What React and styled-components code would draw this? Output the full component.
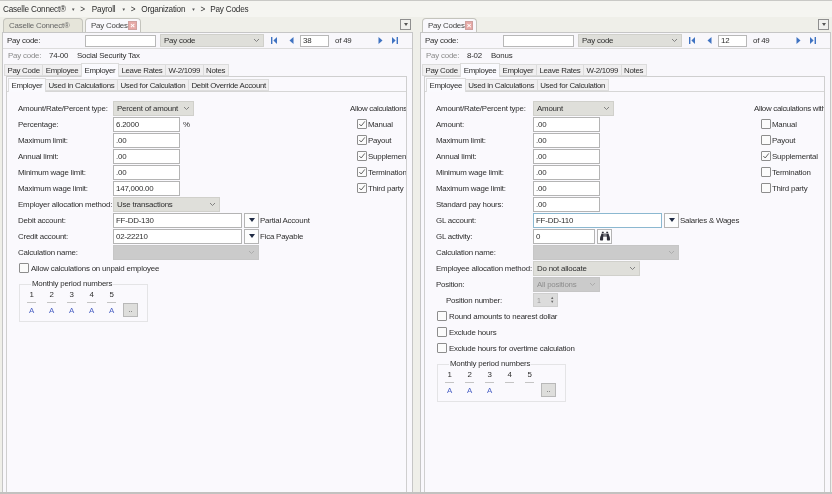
import React from "react";
import styled, { createGlobalStyle } from "styled-components";
import { FaBinoculars } from "react-icons/fa";

const Global = createGlobalStyle`
  html, body { margin: 0; padding: 0; background: #f1f0eb; }
  #root { width: 832px; height: 494px; overflow: hidden; }
`;

const Screen = styled.div`
  width: 832px;
  height: 494px;
  box-sizing: border-box;
  display: flex;
  flex-direction: column;
  overflow: hidden;
  background: #efefe9;
  border-top: 1px solid #c9c9c6;
  border-bottom: 2px solid #c2c2c0;
  font-family: "Liberation Sans", Arial, sans-serif;
  font-size: 7.9px;
  letter-spacing: -0.2px;
  color: #2e2e2e;
  filter: blur(0.3px);
`;

const Breadcrumb = styled.div`
  height: 16px;
  flex: none;
  display: flex;
  align-items: center;
  padding-left: 3px;
  gap: 5px;
  font-size: 8.2px;
  background: #f5f5f1;
`;

const Crumb = styled.span`
  margin-right: ${(p) => p.$gap || 0}px;
`;

const Caret = styled.span`
  font-size: 4.5px;
  color: #555;
`;

const Panes = styled.div`
  flex: 1;
  min-height: 0;
  display: flex;
  gap: 7px;
  padding-left: 2px;
`;

const PaneBox = styled.section`
  width: 411px;
  flex: none;
  display: flex;
  flex-direction: column;
`;

const TabStrip = styled.div`
  height: 15px;
  flex: none;
  display: flex;
  align-items: flex-end;
  gap: 2px;
  position: relative;
  padding-left: ${(p) => p.$pad}px;
`;

const DocTab = styled.div`
  height: 14px;
  box-sizing: border-box;
  padding: 0 3px 0 5px;
  display: flex;
  align-items: center;
  justify-content: space-between;
  white-space: nowrap;
  border: 1px solid #c4c4bd;
  border-bottom: 0;
  border-radius: 4px 4px 0 0;
  width: ${(p) => p.$w}px;
  background: ${(p) => (p.$active ? "#f9f8fc" : "#e6e5da")};
  color: ${(p) => (p.$active ? "#444" : "#666")};
`;

const CloseBox = styled.span`
  width: 9px;
  height: 9px;
  background: #e7a9a7;
  border: 1px solid #cfa09e;
  box-sizing: border-box;
  color: #fff;
  font-size: 8px;
  line-height: 7px;
  text-align: center;
  font-weight: 700;
`;

const StripMenu = styled.div`
  position: absolute;
  right: 2px;
  top: 2px;
  width: 11px;
  height: 11px;
  box-sizing: border-box;
  border: 1px solid #8f8f8f;
  background: #f0f0ee;
  display: flex;
  align-items: center;
  justify-content: center;
  &::after {
    content: "";
    border: 2.5px solid transparent;
    border-top: 3px solid #555;
    border-bottom: 0;
  }
`;

const PaneBody = styled.div`
  flex: 1;
  min-height: 0;
  display: flex;
  flex-direction: column;
  background: #f9f8fc;
  border: 1px solid #c6c6c6;
  border-bottom: 0;
`;

const Toolbar = styled.div`
  height: 16px;
  flex: none;
  box-sizing: border-box;
  display: flex;
  align-items: center;
  padding-left: 4px;
  border-bottom: 1px solid #dcdcdc;
  background: #f8f7fb;
`;

const ToolLabel = styled.span`
  width: 78px;
  flex: none;
`;

const ToolInput = styled.div`
  width: ${(p) => p.$w}px;
  height: 12px;
  flex: none;
  margin-right: ${(p) => p.$mr || 0}px;
  box-sizing: border-box;
  background: #fff;
  border: 1px solid #b8b8b8;
  padding-left: 2px;
  line-height: 10px;
`;

const NavBtn = styled.svg`
  width: 9px;
  height: 9px;
  flex: none;
  margin-right: ${(p) => p.$mr || 0}px;
`;

const OfText = styled.span`
  width: 47px;
  flex: none;
  padding-left: 6px;
  box-sizing: border-box;
`;

const Summary = styled.div`
  height: 13px;
  flex: none;
  display: flex;
  align-items: center;
  padding-left: 5px;
`;

const SummaryKey = styled.span`
  width: 41px;
  color: #8b8b8b;
`;

const SummaryCode = styled.span`
  width: ${(p) => p.$w}px;
`;

const MainTabs = styled.div`
  height: 14px;
  flex: none;
  display: flex;
  align-items: flex-end;
  padding-left: 2px;
  letter-spacing: -0.3px;
`;

const TabItem = styled.div`
  height: ${(p) => (p.$active ? 14 : 12)}px;
  box-sizing: border-box;
  padding: 0 2.5px;
  display: flex;
  align-items: center;
  background: ${(p) => (p.$active ? "#fafafe" : "#f0eff0")};
  border: 1px solid #dcdcdc;
  border-bottom: ${(p) => (p.$active ? "0" : "1px solid #dcdcdc")};
  margin-left: -1px;
  position: relative;
  white-space: nowrap;
  ${(p) => (p.$active ? "margin-bottom: -1px; z-index: 1;" : "")}
`;

const OuterPanel = styled.div`
  flex: 1;
  min-height: 0;
  margin: 0 5px 0 3px;
  padding-top: 1px;
  display: flex;
  flex-direction: column;
  border: 1px solid #cfcfcf;
  border-bottom: 0;
  background: #faf9fd;
`;

const SubTabs = styled(MainTabs)`
  height: 13px;
  padding-left: 2px;
`;

const InnerPanel = styled.div`
  flex: 1;
  min-height: 0;
  display: flex;
  border-top: 1px solid #d6d6d6;
  padding-top: 8px;
  overflow: hidden;
  background: #faf9fd;
`;

const FormColumn = styled.div`
  width: ${(p) => p.$w}px;
  flex: none;
  padding-left: 11px;
  box-sizing: border-box;
  --label: ${(p) => p.$label}px;
`;

const Row = styled.div`
  height: 16px;
  display: flex;
  align-items: center;
  white-space: nowrap;
`;

const Label = styled.span`
  flex: none;
  width: var(--label);
  box-sizing: border-box;
  padding-left: ${(p) => p.$indent || 0}px;
`;

const Input = styled.div`
  width: ${(p) => p.$w}px;
  height: 15px;
  flex: none;
  box-sizing: border-box;
  background: #fff;
  border: 1px solid ${(p) => (p.$focus ? "#8bb8d0" : "#b4b4b4")};
  padding-left: 2px;
  line-height: 13px;
`;

const SelectBox = styled.div`
  width: ${(p) => p.$w}px;
  height: ${(p) => p.$h || 15}px;
  flex: none;
  box-sizing: border-box;
  padding: 0 3px;
  margin-right: ${(p) => p.$mr || 0}px;
  display: flex;
  align-items: center;
  justify-content: space-between;
  background: ${(p) => (p.$disabled ? "#cbcbcb" : "#dfdfda")};
  color: ${(p) => (p.$disabled ? "#8e8e8e" : "#2e2e2e")};
  border: 1px solid ${(p) => (p.$disabled ? "#c6c6c6" : "#d0d0cb")};
`;

const Suffix = styled.span`
  margin-left: ${(p) => p.$ml || 1}px;
`;

const SquareBtn = styled.div`
  width: 15px;
  height: 15px;
  margin-left: 2px;
  flex: none;
  box-sizing: border-box;
  background: #fdfdfd;
  border: 1px solid #b4b4b4;
  display: flex;
  align-items: center;
  justify-content: center;
  color: #2f2f3a;
  font-size: 10px;
`;

const DownArrow = styled.span`
  border: 3.5px solid transparent;
  border-top: 4px solid #1f2a44;
  border-bottom: 0;
`;

const Spinner = styled.div`
  width: 25px;
  height: 14px;
  box-sizing: border-box;
  background: #dcdcdc;
  color: #999;
  border: 1px solid #cfcfcf;
  display: flex;
  align-items: center;
  justify-content: space-between;
  padding: 0 3px;
  font-size: 7px;
`;

const SpinArrows = styled.span`
  font-size: 4px;
  line-height: 4px;
  color: #666;
`;

const BoxMark = styled.span`
  width: 10px;
  height: 10px;
  flex: none;
  box-sizing: border-box;
  border: 1px solid #8d8d8d;
  border-radius: 1px;
  background: #fbfbfb;
  margin: 0 ${(p) => p.$gap}px 0 1px;
  display: inline-flex;
  align-items: center;
  justify-content: center;
`;

const AllowColumn = styled.div`
  flex: 1;
  min-width: 0;
  white-space: nowrap;
`;

const AllowHead = styled(Row)`
  letter-spacing: -0.3px;
`;

const AllowRow = styled(Row)`
  padding-left: 6px;
`;

const PeriodGroup = styled.fieldset`
  width: 129px;
  height: 42px;
  margin: 4px 0 0 1px;
  padding: 1px 0 0 7px;
  box-sizing: border-box;
  border: 1px solid #e4e4e6;
  display: flex;
  position: relative;
  min-inline-size: auto;
`;

const GroupLegend = styled.legend`
  padding: 0 1px;
  margin-left: 4px;
  line-height: 8px;
  height: 8px;
`;

const PeriodCols = styled.div`
  display: flex;
  gap: 11px;
`;

const PeriodCol = styled.div`
  width: 9px;
  display: flex;
  flex-direction: column;
  align-items: center;
`;

const PeriodNum = styled.div`
  width: 9px;
  height: 13px;
  line-height: 12px;
  text-align: center;
  border-bottom: 1px solid #c4c4c4;
  margin-bottom: 3px;
`;

const PeriodVal = styled.div`
  height: 10px;
  line-height: 10px;
  color: #4a60c4;
  font-weight: 500;
`;

const DotsBtn = styled.div`
  position: absolute;
  right: 9px;
  bottom: 4px;
  width: 15px;
  height: 14px;
  box-sizing: border-box;
  background: #dededc;
  border: 1px solid #b8b8b8;
  text-align: center;
  line-height: 11px;
  color: #555;
`;

const Chevron = ({ color = "#777" }) => (
  <svg width="7" height="5" viewBox="0 0 7 5" fill="none">
    <path d="M1 1l2.5 2.5L6 1" stroke={color} strokeWidth="0.9" />
  </svg>
);

const Check = () => (
  <svg width="8" height="8" viewBox="0 0 8 8" fill="none">
    <path d="M1.3 4l1.9 2L6.8 1.4" stroke="#555" strokeWidth="0.9" />
  </svg>
);

const navPaths = {
  first: (
    <>
      <rect x="1" y="1" width="1.4" height="7" />
      <path d="M7 1v7L3.4 4.5z" />
    </>
  ),
  prev: <path d="M6.5 1v7L2.5 4.5z" />,
  next: <path d="M2.5 1v7l4-3.5z" />,
  last: (
    <>
      <rect x="6.6" y="1" width="1.4" height="7" />
      <path d="M2 1v7l3.6-3.5z" />
    </>
  ),
};

const Nav = ({ kind, mr }) => (
  <NavBtn viewBox="0 0 9 9" fill="#3f73c2" $mr={mr}>
    {navPaths[kind]}
  </NavBtn>
);

const Field = ({ label, children, indent }) => (
  <Row>
    <Label $indent={indent}>{label}</Label>
    {children}
  </Row>
);

const CheckRow = ({ on, children }) => (
  <Row>
    <BoxMark $gap={2}>{on && <Check />}</BoxMark>
    {children}
  </Row>
);

const AllowItem = ({ on, children }) => (
  <AllowRow>
    <BoxMark $gap={1}>{on && <Check />}</BoxMark>
    {children}
  </AllowRow>
);

const Select = ({ w, children, disabled }) => (
  <SelectBox $w={w} $disabled={disabled}>
    <span>{children}</span>
    <Chevron color={disabled ? "#a8a8a8" : "#777"} />
  </SelectBox>
);

const Account = ({ value, note, focus }) => (
  <>
    <Input $w={129} $focus={focus}>{value}</Input>
    <SquareBtn><DownArrow /></SquareBtn>
    <Suffix>{note}</Suffix>
  </>
);

const Periods = ({ vals }) => (
  <PeriodGroup>
    <GroupLegend>Monthly period numbers</GroupLegend>
    <PeriodCols>
      {[1, 2, 3, 4, 5].map((n, i) => (
        <PeriodCol key={n}>
          <PeriodNum>{n}</PeriodNum>
          <PeriodVal>{vals[i]}</PeriodVal>
        </PeriodCol>
      ))}
    </PeriodCols>
    <DotsBtn>..</DotsBtn>
  </PeriodGroup>
);

const Pane = ({ tabs, activeMain, subTabs, code, codeWidth, name, record, stripPad, form, allow, children }) => (
  <PaneBox>
    <TabStrip $pad={stripPad}>
      {tabs}
      <StripMenu />
    </TabStrip>
    <PaneBody>
      <Toolbar>
        <ToolLabel>Pay code:</ToolLabel>
        <ToolInput $w={71} $mr={4} />
        <SelectBox $w={104} $h={13} $mr={6}>
          <span>Pay code</span>
          <Chevron />
        </SelectBox>
        <Nav kind="first" mr={8} />
        <Nav kind="prev" mr={4} />
        <ToolInput $w={29}>{record}</ToolInput>
        <OfText>of 49</OfText>
        <Nav kind="next" mr={5} />
        <Nav kind="last" />
      </Toolbar>
      <Summary>
        <SummaryKey>Pay code:</SummaryKey>
        <SummaryCode $w={codeWidth}>{code}</SummaryCode>
        <span>{name}</span>
      </Summary>
      <MainTabs>
        {["Pay Code", "Employee", "Employer", "Leave Rates", "W-2/1099", "Notes"].map((t) => (
          <TabItem key={t} $active={t === activeMain}>{t}</TabItem>
        ))}
      </MainTabs>
      <OuterPanel>
        <SubTabs>
          {subTabs.map((t, i) => (
            <TabItem key={t} $active={i === 0}>{t}</TabItem>
          ))}
        </SubTabs>
        <InnerPanel>
          <FormColumn $w={form.width} $label={form.label}>
            {children}
          </FormColumn>
          <AllowColumn>{allow}</AllowColumn>
        </InnerPanel>
      </OuterPanel>
    </PaneBody>
  </PaneBox>
);

export default function App() {
  return (
    <Screen>
      <Global />
      <Breadcrumb>
        <Crumb>Caselle Connect®</Crumb><Caret>▼</Caret><Crumb $gap={2}>&gt;</Crumb>
        <Crumb $gap={1}>Payroll</Crumb><Caret>▼</Caret><Crumb $gap={1}>&gt;</Crumb>
        <Crumb $gap={1}>Organization</Crumb><Caret>▼</Caret><Crumb>&gt;</Crumb>
        <Crumb>Pay Codes</Crumb>
      </Breadcrumb>
      <Panes>
        <Pane
          stripPad={1}
          tabs={
            <>
              <DocTab $w={80}>Caselle Connect®</DocTab>
              <DocTab $w={56} $active>Pay Codes<CloseBox>×</CloseBox></DocTab>
            </>
          }
          record="38"
          code="74-00"
          codeWidth={28}
          name="Social Security Tax"
          activeMain="Employer"
          subTabs={["Employer", "Used in Calculations", "Used for Calculation", "Debit Override Account"]}
          form={{ width: 343, label: 95 }}
          allow={
            <>
              <AllowHead>Allow calculations</AllowHead>
              <AllowItem on>Manual</AllowItem>
              <AllowItem on>Payout</AllowItem>
              <AllowItem on>Supplemental</AllowItem>
              <AllowItem on>Termination</AllowItem>
              <AllowItem on>Third party</AllowItem>
            </>
          }
        >
          <Field label="Amount/Rate/Percent type:"><Select w={81}>Percent of amount</Select></Field>
          <Field label="Percentage:"><Input $w={67}>6.2000</Input><Suffix $ml={3}>%</Suffix></Field>
          <Field label="Maximum limit:"><Input $w={67}>.00</Input></Field>
          <Field label="Annual limit:"><Input $w={67}>.00</Input></Field>
          <Field label="Minimum wage limit:"><Input $w={67}>.00</Input></Field>
          <Field label="Maximum wage limit:"><Input $w={67}>147,000.00</Input></Field>
          <Field label="Employer allocation method:"><Select w={107}>Use transactions</Select></Field>
          <Field label="Debit account:"><Account value="FF-DD-130" note="Partial Account" /></Field>
          <Field label="Credit account:"><Account value="02-22210" note="Fica Payable" /></Field>
          <Field label="Calculation name:"><Select w={146} disabled /></Field>
          <CheckRow>Allow calculations on unpaid employee</CheckRow>
          <Periods vals={["A", "A", "A", "A", "A"]} />
        </Pane>
        <Pane
          stripPad={2}
          tabs={<DocTab $w={55} $active>Pay Codes<CloseBox>×</CloseBox></DocTab>}
          record="12"
          code="8-02"
          codeWidth={24}
          name="Bonus"
          activeMain="Employee"
          subTabs={["Employee", "Used in Calculations", "Used for Calculation"]}
          form={{ width: 329, label: 97 }}
          allow={
            <>
              <AllowHead>Allow calculations with</AllowHead>
              <AllowItem>Manual</AllowItem>
              <AllowItem>Payout</AllowItem>
              <AllowItem on>Supplemental</AllowItem>
              <AllowItem>Termination</AllowItem>
              <AllowItem>Third party</AllowItem>
            </>
          }
        >
          <Field label="Amount/Rate/Percent type:"><Select w={81}>Amount</Select></Field>
          <Field label="Amount:"><Input $w={67}>.00</Input></Field>
          <Field label="Maximum limit:"><Input $w={67}>.00</Input></Field>
          <Field label="Annual limit:"><Input $w={67}>.00</Input></Field>
          <Field label="Minimum wage limit:"><Input $w={67}>.00</Input></Field>
          <Field label="Maximum wage limit:"><Input $w={67}>.00</Input></Field>
          <Field label="Standard pay hours:"><Input $w={67}>.00</Input></Field>
          <Field label="GL account:"><Account value="FF-DD-110" note="Salaries & Wages" focus /></Field>
          <Field label="GL activity:"><Input $w={62}>0</Input><SquareBtn><FaBinoculars /></SquareBtn></Field>
          <Field label="Calculation name:"><Select w={146} disabled /></Field>
          <Field label="Employee allocation method:"><Select w={107}>Do not allocate</Select></Field>
          <Field label="Position:"><Select w={67} disabled>All positions</Select></Field>
          <Field label="Position number:" indent={10}>
            <Spinner>1<SpinArrows>▲<br />▼</SpinArrows></Spinner>
          </Field>
          <CheckRow>Round amounts to nearest dollar</CheckRow>
          <CheckRow>Exclude hours</CheckRow>
          <CheckRow>Exclude hours for overtime calculation</CheckRow>
          <Periods vals={["A", "A", "A"]} />
        </Pane>
      </Panes>
    </Screen>
  );
}
